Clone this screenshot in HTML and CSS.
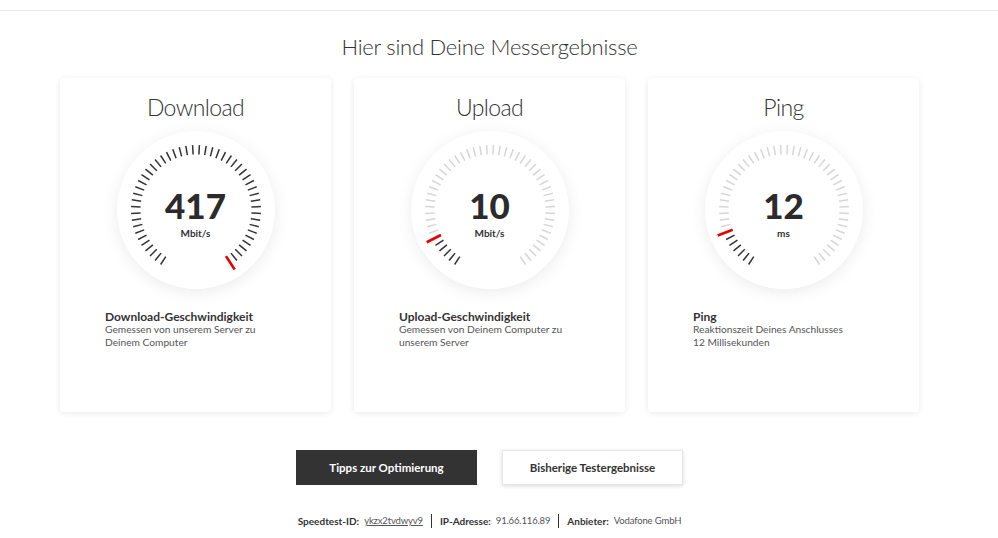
FILE: index.html
```html
<!DOCTYPE html>
<html lang="de">
<head>
<meta charset="utf-8">
<title>Messergebnisse</title>
<link rel="stylesheet" href="styles.css">
</head>
<body>
<header class="topbar"></header>
<main class="page">
  <h1 class="title">Hier sind Deine Messergebnisse</h1>
  <div class="cards">
    <section class="card">
      <h2 class="card-title">Download</h2>
      <div class="gauge" data-active="49">
        <svg class="ticks" viewBox="-79 -79 158 158"></svg>
        <div class="readout"><span class="value">417</span><span class="unit">Mbit/s</span></div>
      </div>
      <div class="desc">
        <h3 class="desc-title">Download-Geschwindigkeit</h3>
        <p class="desc-text">Gemessen von unserem Server zu<br>Deinem Computer</p>
      </div>
    </section>
    <section class="card">
      <h2 class="card-title">Upload</h2>
      <div class="gauge" data-active="5">
        <svg class="ticks" viewBox="-79 -79 158 158"></svg>
        <div class="readout"><span class="value">10</span><span class="unit">Mbit/s</span></div>
      </div>
      <div class="desc">
        <h3 class="desc-title">Upload-Geschwindigkeit</h3>
        <p class="desc-text">Gemessen von Deinem Computer zu<br>unserem Server</p>
      </div>
    </section>
    <section class="card">
      <h2 class="card-title">Ping</h2>
      <div class="gauge" data-active="6">
        <svg class="ticks" viewBox="-79 -79 158 158"></svg>
        <div class="readout"><span class="value">12</span><span class="unit">ms</span></div>
      </div>
      <div class="desc">
        <h3 class="desc-title">Ping</h3>
        <p class="desc-text">Reaktionszeit Deines Anschlusses<br>12 Millisekunden</p>
      </div>
    </section>
  </div>
  <div class="actions">
    <button class="btn btn-dark" type="button">Tipps zur Optimierung</button>
    <button class="btn btn-light" type="button">Bisherige Testergebnisse</button>
  </div>
  <p class="meta">
    <span class="meta-item"><b class="meta-label">Speedtest-ID:</b><a class="meta-link" href="#">ykzx2tvdwyv9</a></span>
    <span class="meta-sep"></span>
    <span class="meta-item"><b class="meta-label">IP-Adresse:</b><span>91.66.116.89</span></span>
    <span class="meta-sep"></span>
    <span class="meta-item"><b class="meta-label">Anbieter:</b><span>Vodafone GmbH</span></span>
  </p>
</main>
<script src="script.js"></script>
</body>
</html>
```

FILE: styles.css
```css
* { box-sizing: border-box; }
html, body { margin: 0; padding: 0; background: #fff; }
body {
  font-family: Lato, "Open Sans", "Liberation Sans", sans-serif;
  color: #333;
}
.topbar {
  height: 11px;
  border-bottom: 1px solid #ebebeb;
}
.page {
  width: 979px;
  display: flex;
  flex-direction: column;
  align-items: center;
}
.title {
  margin: 22px 0 0;
  font-size: 22px;
  line-height: 28px;
  font-weight: 300;
  letter-spacing: -0.25px;
  color: #333;
}
.cards {
  margin-top: 17px;
  display: flex;
  gap: 23px;
}
.card {
  width: 271px;
  height: 334px;
  background: #fff;
  border-radius: 4px;
  box-shadow: 0 1px 6px rgba(0,0,0,0.09);
  display: flex;
  flex-direction: column;
  align-items: center;
  padding-top: 14px;
}
.card-title {
  margin: 0;
  font-size: 23px;
  line-height: 30px;
  font-weight: 300;
  letter-spacing: -0.6px;
  color: #333;
}
.gauge {
  margin-top: 9px;
  width: 158px;
  height: 158px;
  border-radius: 50%;
  background: #fff;
  box-shadow: 0 3px 16px rgba(0,0,0,0.08);
  display: grid;
}
.ticks, .readout { grid-area: 1 / 1; }
.ticks { width: 158px; height: 158px; }
.tick { stroke-width: 1.5; }
.tick-on { stroke: #333; }
.tick-off { stroke: #d6d6d6; }
.tick-red { stroke: #e60000; stroke-width: 2.6; }
.readout {
  display: flex;
  flex-direction: column;
  align-items: center;
  justify-content: center;
  padding-top: 6px;
}
.value {
  font-size: 35px;
  line-height: 36px;
  font-weight: 900;
  color: #2b2b2b;
}
.unit {
  margin-top: 4px;
  font-size: 10px;
  line-height: 12px;
  font-weight: 700;
  color: #333;
}
.desc {
  align-self: stretch;
  margin-top: 21px;
  padding-left: 45px;
}
.desc-title {
  margin: 0;
  font-size: 12px;
  line-height: 13px;
  font-weight: 700;
  color: #333;
}
.desc-text {
  margin: 0;
  font-size: 10.2px;
  line-height: 13px;
  color: #555;
}
.actions {
  margin-top: 38px;
  display: flex;
  gap: 25px;
}
.btn {
  width: 181px;
  height: 35px;
  font-family: inherit;
  font-size: 11.5px;
  font-weight: 700;
  border: 0;
  padding: 0;
  cursor: pointer;
}
.btn-dark {
  background: #333;
  color: #fff;
}
.btn-light {
  background: #fff;
  color: #333;
  border: 1px solid #e6e6e6;
  box-shadow: 0 1px 4px rgba(0,0,0,0.15);
}
.meta {
  margin: 29px 0 0;
  display: flex;
  align-items: center;
  gap: 8px;
  font-size: 9.5px;
  line-height: 14px;
  letter-spacing: -0.15px;
  color: #555;
}
.meta-item {
  display: flex;
  gap: 5px;
}
.meta-label {
  font-size: 10px;
  letter-spacing: 0;
  color: #333;
}
.meta-link { color: #555; text-decoration: underline; }
.meta-sep {
  width: 1px;
  height: 14px;
  background: #333;
}
```

FILE: script.js
```js
(function () {
  var ns = 'http://www.w3.org/2000/svg';
  var gauges = document.querySelectorAll('.gauge');
  for (var g = 0; g < gauges.length; g++) {
    var gauge = gauges[g];
    var svg = gauge.querySelector('svg');
    var active = parseInt(gauge.getAttribute('data-active'), 10);
    for (var i = 0; i < 50; i++) {
      var a = (-147 + 6 * i) * Math.PI / 180;
      var red = i === active;
      var r1 = red ? 55 : 55.5;
      var r2 = red ? 71 : 65;
      var line = document.createElementNS(ns, 'line');
      line.setAttribute('x1', (Math.sin(a) * r1).toFixed(2));
      line.setAttribute('y1', (-Math.cos(a) * r1).toFixed(2));
      line.setAttribute('x2', (Math.sin(a) * r2).toFixed(2));
      line.setAttribute('y2', (-Math.cos(a) * r2).toFixed(2));
      line.setAttribute('class', 'tick ' + (red ? 'tick-red' : (i < active ? 'tick-on' : 'tick-off')));
      svg.appendChild(line);
    }
  }
})();
```
